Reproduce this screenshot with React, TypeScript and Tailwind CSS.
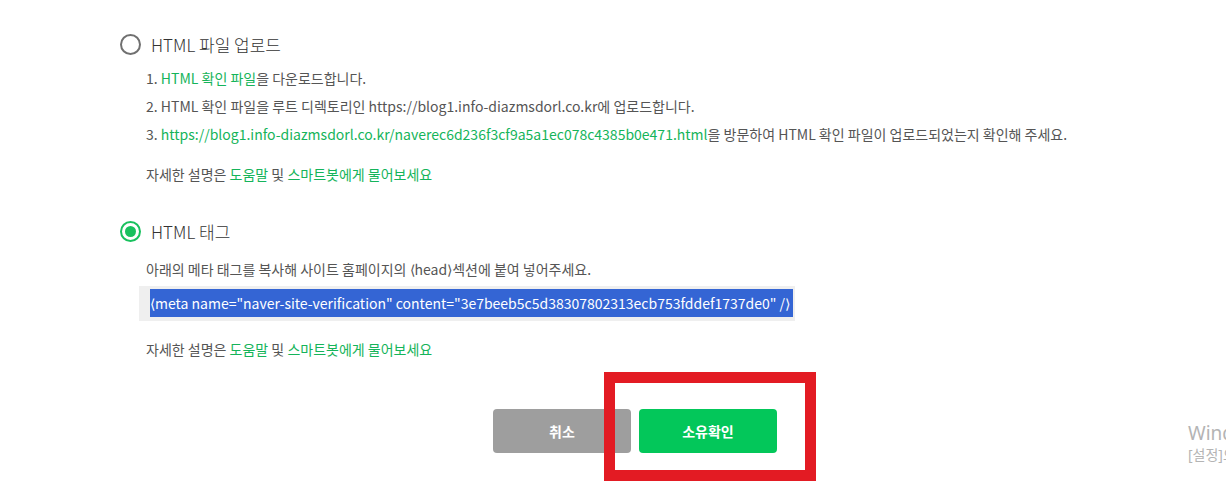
const font = { fontFamily: '"Noto Sans CJK KR", "Noto Sans", sans-serif' };

function Radio({ checked }: { checked?: boolean }) {
  if (checked) {
    return (
      <span className="flex h-[21px] w-[21px] items-center justify-center rounded-full border-[2px] border-[#19c15e]">
        <span className="h-[11px] w-[11px] rounded-full bg-[#19c15e]" />
      </span>
    );
  }
  return <span className="h-[21px] w-[21px] rounded-full border-[2px] border-[#707070]" />;
}

function HelpLine({ className = "" }: { className?: string }) {
  return (
    <p className={`pl-[26px] text-[14px] leading-[28px] text-[#555] ${className}`}>
      자세한 설명은 <span className="text-[#15b45a]">도움말</span> 및{" "}
      <span className="text-[#15b45a]">스마트봇에게 물어보세요</span>
    </p>
  );
}

export default function App() {
  return (
    <div className="relative h-[490px] w-[1226px] overflow-hidden bg-white" style={font}>
      <div className="pl-[120px] pt-[34px]">
        {/* HTML 파일 업로드 */}
        <div className="flex h-[21px] items-center gap-[10px]">
          <Radio />
          <span className="text-[17px] font-light text-[#333]">HTML 파일 업로드</span>
        </div>
        <div className="mt-[9px] pl-[26px] text-[14px] leading-[28px] text-[#555]">
          <p>
            1. <span className="text-[#15b45a]">HTML 확인 파일</span>을 다운로드합니다.
          </p>
          <p>2. HTML 확인 파일을 루트 디렉토리인 https://blog1.info-diazmsdorl.co.kr에 업로드합니다.</p>
          <p>
            3.{" "}
            <span className="text-[#15b45a]">
              https://blog1.info-diazmsdorl.co.kr/naverec6d236f3cf9a5a1ec078c4385b0e471.html
            </span>
            을 방문하여 HTML 확인 파일이 업로드되었는지 확인해 주세요.
          </p>
        </div>
        <HelpLine className="mt-[12px]" />

        {/* HTML 태그 */}
        <div className="mt-[33px] flex h-[21px] items-center gap-[10px]">
          <Radio checked />
          <span className="text-[17px] font-light text-[#333]">HTML 태그</span>
        </div>
        <p className="mt-[13px] pl-[26px] text-[14px] leading-[28px] text-[#555]">
          아래의 메타 태그를 복사해 사이트 홈페이지의 ⟨head⟩섹션에 붙여 넣어주세요.
        </p>
        <div className="mt-[3px] ml-[19px] flex h-[35px] w-[656px] items-start bg-[#efefef] pl-[11px] pr-[2px] pt-[3px]">
          <span className="flex h-[28px] w-full items-center whitespace-nowrap bg-[#3465d4] text-[14px] text-white">
            {'⟨meta name="naver-site-verification" content="3e7beeb5c5d38307802313ecb753fddef1737de0" /⟩'}
          </span>
        </div>
        <HelpLine className="mt-[14px]" />

        <div className="mt-[46px] ml-[373px] flex gap-[8px]">
          <button className="h-[44px] w-[138px] rounded-[4px] bg-[#9e9e9e] text-[14px] font-bold text-white">
            취소
          </button>
          <button className="h-[44px] w-[138px] rounded-[4px] bg-[#03c75a] text-[14px] font-bold text-white">
            소유확인
          </button>
        </div>
      </div>

      {/* annotation box */}
      <div className="absolute left-[604px] top-[372px] h-[109px] w-[212px] border-[11px] border-[#e31b23]" />

      {/* windows watermark */}
      <div
        className="absolute left-[1188px] top-[421px] whitespace-nowrap text-[#b4b4b4]"
        style={{ fontFamily: '"Noto Sans", "Noto Sans CJK KR", sans-serif' }}
      >
        <div className="text-[19px] leading-[24px]">Windows 정품 인증</div>
        <div className="text-[14px] leading-[20px]">[설정]으로 이동하여 Windows를 정품 인증합니다.</div>
      </div>
    </div>
  );
}
